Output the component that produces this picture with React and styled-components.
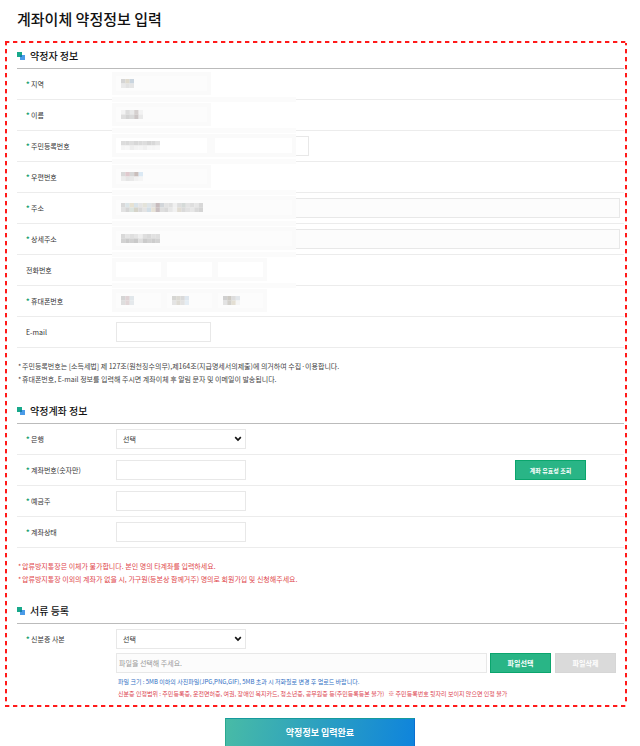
import React, { useState } from "react"
import styled, { createGlobalStyle, css } from "styled-components"

const GlobalStyle = createGlobalStyle`
  * {
    box-sizing: border-box;
  }
  body {
    margin: 0;
    background: #fff;
    color: #333;
    font-family: "Noto Sans CJK KR", "Noto Sans", sans-serif;
    font-size: 7px;
  }
  input, select, button {
    font-family: inherit;
  }
`

const Title = styled.h1`
  margin: 0;
  padding: 7px 0 10px 17px;
  color: #111;
  font-size: 15px;
  font-weight: 500;
  line-height: 24px;
`

const dash = (dir) => `repeating-linear-gradient(${dir}, #ff1a1a 0 4px, #ffb8b8 4px 5px, #fff 5px 8px)`

const FormBox = styled.form`
  margin: 0 13px 0 5px;
  padding: 2px 3px 7px 12px;
  background:
    ${dash("90deg")} top / 100% 2px no-repeat,
    ${dash("90deg")} bottom / 100% 2px no-repeat,
    ${dash("180deg")} left / 2px 100% no-repeat,
    ${dash("180deg")} right / 2px 100% no-repeat;
`

const Heading = styled.h2`
  display: flex;
  align-items: center;
  gap: 5px;
  height: 26px;
  margin: 0;
  border-bottom: 1px solid #bbb;
  color: #111;
  font-size: 10px;
  font-weight: 500;
`

const Row = styled.div`
  position: relative;
  display: flex;
  align-items: center;
  height: 31px;
  border-bottom: 1px solid #ececec;
  ${(p) => p.$veiled && css`
    &::after {
      content: "";
      position: absolute;
      left: 95px;
      bottom: -3px;
      width: 184px;
      height: 5px;
      background: #fbfbfb;
    }
  `}
`

const Label = styled.label`
  flex: 0 0 99px;
  padding-left: 9px;
  line-height: 20px;
`

const Star = styled.span`
  display: inline-block;
  width: 5px;
  color: #0a9c68;
  font-weight: 700;
`

const Value = styled.div`
  position: relative;
  flex: 1;
  display: flex;
  align-items: center;
  gap: ${(p) => p.$gap || 3}px;
  padding-right: 4px;
`

const widths = { short: "95px", phone: "45px", medium: "130px", full: "100%" }

const field = css`
  width: ${(p) => widths[p.$size]};
  height: 20px;
  padding: 0 6px;
  border: 1px solid #e8e8e8;
  border-radius: 0;
  background: #fff;
  color: #333;
  font-size: 7px;
  outline: none;
`

const Input = styled.input`
  ${field}
  &:read-only {
    background: #fcfcfc;
  }
  &::placeholder {
    color: #999;
    opacity: 1;
  }
`

const FileName = styled(Input)`
  flex: 1;
  width: auto;
  min-width: 0;
  margin-right: -1px;
  padding: 0 2px;
`

const SelectWrap = styled.div`
  position: relative;
  display: flex;
  width: fit-content;
  svg {
    position: absolute;
    right: 4px;
    top: 7px;
    pointer-events: none;
  }
`

const Select = styled.select`
  ${field}
  appearance: none;
`

// Soft cover laid over a private value
const Veil = styled.div`
  position: absolute;
  left: ${(p) => p.$left - 4}px;
  top: -2px;
  display: flex;
  align-items: center;
  width: ${(p) => p.$width}px;
  height: 23px;
  padding-left: 5px;
  border: 4px solid #fafafa;
  background: ${(p) => (p.$white ? "#fff" : "#fcfcfc")};
  pointer-events: none;
`

const Notes = styled.ul`
  margin: 0;
  padding: 12px 0 12px 1px;
  list-style: none;
  color: ${(p) => (p.$warn ? "#e0474c" : "#444")};
  line-height: 13px;
`

const NoteStar = styled.span`
  display: inline-block;
  width: 4px;
`

const Upload = styled.div`
  display: flex;
  padding-top: 5px;
`

const UploadBody = styled.div`
  flex: 1;
  min-width: 0;
`

const FileRow = styled.div`
  display: flex;
  gap: 4px;
  padding: 4px 8px 3px 0;
`

const Hint = styled.p`
  margin: 0;
  padding-left: 2px;
  color: ${(p) => (p.$warn ? "#dc4450" : "#2f6fc4")};
  font-size: 6px;
  line-height: 12px;
  white-space: pre-wrap;
`

const Button = styled.button`
  width: ${(p) => p.$width || 61}px;
  height: 20px;
  padding: 0;
  border: 1px solid #0ba56d;
  background: #29b586;
  color: #fff;
  font-size: ${(p) => p.$font || 7}px;
  font-weight: 700;
  &:disabled {
    border-color: #d6d6d6;
    background: #dadada;
  }
`

const CheckButton = styled(Button)`
  margin: 0 34px 0 auto;
`

const Submit = styled.button`
  display: block;
  width: 190px;
  height: 28px;
  margin: 11px auto 0;
  padding: 0;
  border: solid;
  border-width: 1px 1px 0;
  border-color: #169a9c #0a6fd0 #0a6fd0 #2aa98f;
  background: linear-gradient(100deg, #48bba6, #0f84dc);
  color: #fff;
  font-size: 9px;
  font-weight: 700;
`

const SquaresIcon = () => (
  <svg width="8" height="8" viewBox="0 0 8 8" aria-hidden="true">
    <rect width="5" height="5" fill="#18a98b" />
    <rect x="3" y="3" width="5" height="5" fill="#4a9be8" />
    <rect x="3" y="3" width="2" height="2" fill="#147fa8" />
  </svg>
)

const Chevron = () => (
  <svg width="8" height="6" viewBox="0 0 8 6" aria-hidden="true">
    <path d="M1.2 1.2 4 4 6.8 1.2" fill="none" stroke="#111" strokeWidth="1.7" />
  </svg>
)

const Mosaic = ({ rows }) => {
  const cols = rows[0].length
  return (
    <svg width={Math.round((cols * 13) / 3)} height="9" viewBox={`0 0 ${cols} 2`} preserveAspectRatio="none" aria-hidden="true">
      {rows.map((row, y) => row.map((c, x) => (
        <rect key={`${x}-${y}`} x={x} y={y} width="1.02" height="1.02" fill={`#${c}`} />
      )))}
    </svg>
  )
}

const tiles = (top, bottom) => [top.split(" "), bottom.split(" ")]

const mosaics = {
  region: tiles("d5d5d5 dfdace cad5df", "e9e9e9 e2e2e2 e5e5e5"),
  name: tiles("f3f3f3 dddddd e9e9e9 d5d0cf f3f3f3", "dedede d3d3d3 dadada cbc5c5 e9e9e9"),
  ssn: tiles("dcdcdc d9d9d9 dedede d7d7d7 dadada dddddd d5d5d5 d8d8d8 e2e2e2", "f5f5f5 f7f7f7 eeeeee f3f3f3 f4f4f4 f0f0f0 f7f7f7 f6f6f6 f8f8f8"),
  zip: tiles("d9d9d9 dfc9cd d7d7d7 c9bebb dbe9f4", "ededed e5e5e5 e9e9e9 f1f1f1 f5f5f5"),
  address: tiles(
    "d9d9d9 dce5e8 e7e2d2 d9e3e9 e5e5e5 e4e3da dfe5e8 dedede c7bbbd d2d6da e3e3e3 dfdfdf f0f0f0 dedede d5dad8 e4e4e4 dedede e6e6e6 d8d8d8",
    "e2e2e2 d6d6d6 dce4df d6d4c9 d9d9d9 e4e4e4 d3dfe7 e7e2d7 c9bfc1 dfdfdf d9d9d9 e7e7e7 f1f1f1 e1ddd4 dadada e2e2e2 e7e7e7 dadada d4d4d4"
  ),
  detail: tiles("d9d9d9 e5e5e5 dfdfdf e5e5e5 eeeeee dedede d9d9d9 e1e1e1 dfdfdf", "d2d2d2 cacaca d0d0d0 c9c9c9 dedede cbcbcb d2d2d2 cccccc d3d3d3"),
  phone1: tiles("d5d5d5 dfd3d5 e1e7eb", "dedede e1d6d7 e5e9ec"),
  phone2: tiles("d6d6d3 dcdad4 d9d9d9 dfe7ef", "e4e4e4 dedbd4 e2e2e2 e5edf4"),
  phone3: tiles("d0d0d0 cdcac4 dddddd e3e7eb", "e3e3e3 d2d0cb e4dfd3 f5f5f5"),
}

const shortVeil = (rows) => [{ left: 0, width: 99, rows }]
const phoneVeils = (list, white) => [0, 51, 102].map((left, i) => ({ left, width: 53, rows: list[i], white }))

const personal = [
  { id: "region", label: "지역", required: true, sizes: ["short"], veils: shortVeil(mosaics.region) },
  { id: "name", label: "이름", required: true, sizes: ["short"], veils: shortVeil(mosaics.name) },
  {
    id: "ssn", label: "주민등록번호", required: true, sizes: ["short", "short"],
    veils: [{ left: 0, width: 99, rows: mosaics.ssn, white: true }, { left: 99, width: 85, white: true }],
  },
  { id: "zip", label: "우편번호", required: true, sizes: ["short"], veils: shortVeil(mosaics.zip) },
  { id: "address", label: "주소", required: true, sizes: ["full"], veils: [{ left: 0, width: 184, rows: mosaics.address }] },
  { id: "detail", label: "상세주소", required: true, sizes: ["full"], veils: [{ left: 0, width: 184, rows: mosaics.detail }] },
  { id: "tel", label: "전화번호", sizes: ["phone", "phone", "phone"], veils: phoneVeils([], true) },
  {
    id: "mobile", label: "휴대폰번호", required: true, sizes: ["phone", "phone", "phone"],
    veils: phoneVeils([mosaics.phone1, mosaics.phone2, mosaics.phone3]),
  },
  { id: "email", label: "E-mail", sizes: ["short"], veils: [] },
]

const FieldLabel = ({ id, required, children }) => (
  <Label htmlFor={id}>{required && <Star>*</Star>}{children}</Label>
)

const PersonalRow = ({ id, label, required, sizes, veils }) => (
  <Row $veiled={veils.length > 0 && id !== "mobile"}>
    <FieldLabel id={id} required={required}>{label}</FieldLabel>
    <Value $gap={sizes.length === 3 ? 6 : 3}>
      {sizes.map((size, i) => (
        <Input
          key={i}
          id={i ? `${id}${i}` : id}
          aria-label={i ? `${label} ${i + 1}` : undefined}
          $size={size}
          readOnly={size === "full"}
        />
      ))}
      {veils.map((v) => (
        <Veil key={v.left} $left={v.left} $width={v.width} $white={v.white}>
          {v.rows && <Mosaic rows={v.rows} />}
        </Veil>
      ))}
    </Value>
  </Row>
)

const Dropdown = ({ id }) => (
  <SelectWrap>
    <Select id={id} $size="medium">
      <option>선택</option>
    </Select>
    <Chevron />
  </SelectWrap>
)

const NoteList = ({ items, warn }) => (
  <Notes $warn={warn}>
    {items.map((text) => <li key={text}><NoteStar>*</NoteStar>{text}</li>)}
  </Notes>
)

const App = () => {
  const [fileName, setFileName] = useState("")

  const handleSubmit = (e) => {
    e.preventDefault()
  }

  return (
    <main>
      <GlobalStyle />
      <Title>계좌이체 약정정보 입력</Title>
      <FormBox id="agreement" onSubmit={handleSubmit}>
        <Heading><SquaresIcon />약정자 정보</Heading>
        {personal.map((item) => <PersonalRow key={item.id} {...item} />)}
        <NoteList
          items={[
            "주민등록번호는 [소득세법] 제 127조(원천징수의무),제164조(지급명세서의제출)에 의거하여 수집·이용합니다.",
            "휴대폰번호, E-mail 정보를 입력해 주시면 계좌이체 후 알림 문자 및 이메일이 발송됩니다.",
          ]}
        />

        <Heading><SquaresIcon />약정계좌 정보</Heading>
        <Row>
          <FieldLabel id="bank" required>은행</FieldLabel>
          <Value><Dropdown id="bank" /></Value>
        </Row>
        <Row>
          <FieldLabel id="account" required>계좌번호(숫자만)</FieldLabel>
          <Value>
            <Input id="account" $size="medium" />
            <CheckButton type="button" $width={71} $font={6}>계좌 유효성 조회</CheckButton>
          </Value>
        </Row>
        <Row>
          <FieldLabel id="holder" required>예금주</FieldLabel>
          <Value><Input id="holder" $size="medium" /></Value>
        </Row>
        <Row>
          <FieldLabel id="status" required>계좌상태</FieldLabel>
          <Value><Input id="status" $size="medium" /></Value>
        </Row>
        <NoteList
          warn
          items={[
            "압류방지통장은 이체가 불가합니다. 본인 명의 타계좌를 입력하세요.",
            "압류방지통장 이외의 계좌가 없을 시, 가구원(등본상 함께거주) 명의로 회원가입 및 신청해주세요.",
          ]}
        />

        <Heading><SquaresIcon />서류 등록</Heading>
        <Upload>
          <FieldLabel id="idcard" required>신분증 사본</FieldLabel>
          <UploadBody>
            <Dropdown id="idcard" />
            <FileRow>
              <FileName aria-label="파일" placeholder="파일을 선택해 주세요." value={fileName} readOnly />
              <Button type="button">파일선택</Button>
              <Button type="button" disabled={!fileName} onClick={() => setFileName("")}>파일삭제</Button>
            </FileRow>
            <Hint>파일 크기 : 5MB 이하의 사진파일(JPG,PNG,GIF), 5MB 초과 시 저화질로 변경 후 업로드 바랍니다.</Hint>
            <Hint $warn>
              {"신분증 인정범위 : 주민등록증, 운전면허증, 여권, 장애인 복지카드, 청소년증, 공무원증 등(주민등록등본 불가)   ※ 주민등록번호 뒷자리 보이지 않으면 인정 불가"}
            </Hint>
          </UploadBody>
        </Upload>
      </FormBox>
      <Submit type="submit" form="agreement">약정정보 입력완료</Submit>
    </main>
  )
}

export default App
